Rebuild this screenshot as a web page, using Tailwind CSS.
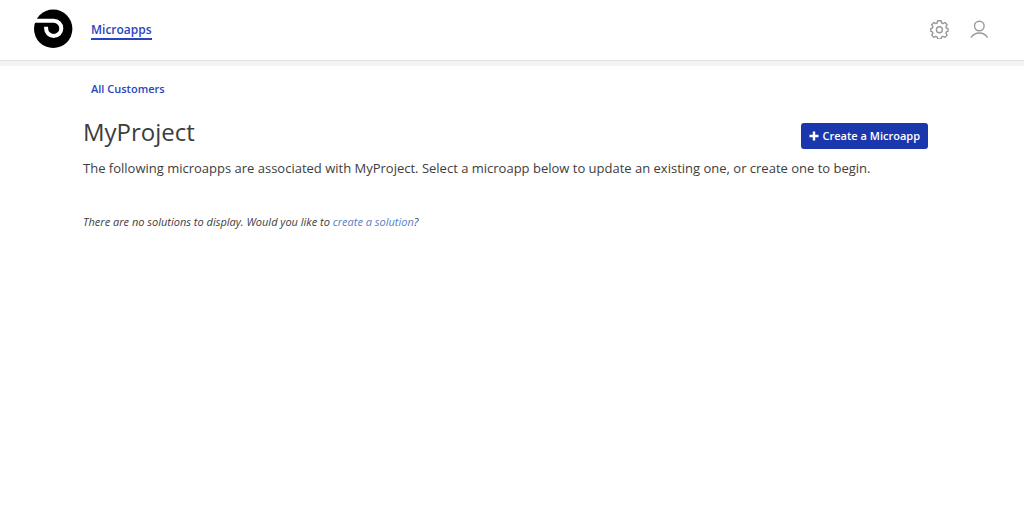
<!DOCTYPE html>
<html lang="en">
<head>
    <meta charset="UTF-8">
    <meta name="viewport" content="width=device-width, initial-scale=1.0">
    <title>MyProject - Microapps</title>
    <script src="https://cdn.jsdelivr.net/npm/@tailwindcss/browser@4"></script>
</head>
<body class="min-h-screen bg-white font-['Open_Sans',sans-serif] text-[#3d3d3d]">
    <!-- Top bar -->
    <header class="flex h-[61px] items-center justify-between border-b border-[#e2e2e2] pr-[35px] pl-[33px] pb-[2px] shadow-[0_5px_0_#f3f3f3]">
        <div class="flex items-center gap-[18px]">
            <a href="#" aria-label="Home">
                <svg class="size-10" viewBox="0 0 40 40" fill="none">
                    <circle cx="20.2" cy="19.8" r="19.2" fill="#000"/>
                    <path d="M0 11.800H20.700a7.600 7.600 0 1 1-7.600 7.600V17.800" stroke="#fff" stroke-width="4"/>
                </svg>
            </a>
            <nav class="pt-[3px]">
                <a href="#" class="block border-b-2 border-[#2b44bd] text-xs leading-4 font-semibold text-[#2b44bd]">Microapps</a>
            </nav>
        </div>
        <div class="flex items-center gap-5">
            <button type="button" aria-label="Settings">
                <svg class="size-5" viewBox="0 0 20 20" fill="none" stroke="#999" stroke-width="1.4" stroke-linejoin="round">
                    <path d="M8.700 1.800h3.400l.6 2.200 1.300.6 2-1.100 2.100 2.300-1.200 1.900.5 1.300 1.600.6v2.600l-1.600.7-.5 1.300 1.200 1.900-2.100 2.300-2-1.100-1.300.6-.6 2.100H8.700l-.6-2.100-1.300-.6-2 1.100-2.100-2.300 1.200-1.900-.5-1.300-1.600-.7V9.600l1.600-.6.5-1.300-1.200-1.900 2.100-2.300 2 1.100 1.300-.6z"/>
                    <circle cx="10.400" cy="10.800" r="3"/>
                </svg>
            </button>
            <button type="button" aria-label="Account">
                <svg class="size-5" viewBox="0 0 20 20" fill="none" stroke="#999" stroke-width="1.4" stroke-linecap="round">
                    <circle cx="10.300" cy="7" r="4.800"/>
                    <path d="M2.300 18.200c1.800-2.800 4.600-4.200 8-4.200s6.200 1.400 8 4.200"/>
                </svg>
            </button>
        </div>
    </header>

    <!-- Page content -->
    <main class="pt-4 pr-24 pl-[83px]">
        <a href="#" class="ml-2 block text-[11px] leading-6 font-semibold text-[#2b44bd]">All Customers</a>
        <div class="mt-[14px] flex items-center justify-between">
            <h1 class="text-2xl leading-7">MyProject</h1>
            <button type="button" class="mt-2 flex h-[26px] items-center gap-1 rounded-[3px] bg-[#1a37ae] px-2 text-[11px] font-semibold text-white">
                <svg class="size-[10px]" viewBox="0 0 10 10" stroke="#fff" stroke-width="2.400">
                    <path d="M5 .5v9M.5 5h9"/>
                </svg>
                Create a Microapp
            </button>
        </div>
        <p class="mt-[9px] text-[13px] leading-5">The following microapps are associated with MyProject. Select a microapp below to update an existing one, or create one to begin.</p>
        <p class="mt-9 text-[11px] leading-4 italic">There are no solutions to display. Would you like to <a href="#" class="text-[#5580c4]">create a solution</a>?</p>
    </main>
</body>
</html>
